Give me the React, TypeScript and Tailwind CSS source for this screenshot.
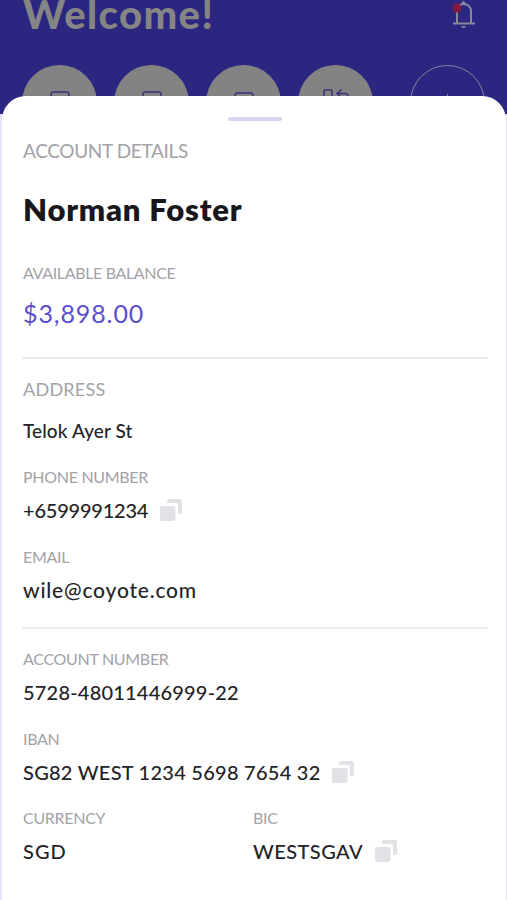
import React from "react";

interface TextProps {
  children: React.ReactNode;
  className?: string;
}

const CopyIcon = () => (
  <svg width="22" height="22" viewBox="0 0 22 22" fill="#e2e2e6">
    <path d="M8.500 0H20a2 2 0 0 1 2 2v11a2 2 0 0 1-2 2h-2V6a2 2 0 0 0-2-2H7V1.500a1.500 1.500 0 0 1 1.500-1.500z" />
    <rect x="0" y="7" width="15.500" height="15" rx="2" />
  </svg>
);

const CardIcon = () => (
  <svg width="20" height="16" viewBox="0 0 20 16" fill="none" stroke="#3a3578" strokeWidth="1.500">
    <rect x="1" y="1" width="18" height="14" rx="2.500" />
  </svg>
);

const TransferIcon = () => (
  <svg width="28" height="20" viewBox="0 0 28 20" fill="none" stroke="#3a3578" strokeWidth="1.500">
    <path d="M2 16V2q0-1 1-1h6q1 0 1 1v14" />
    <path d="M19.500 0.500l-4.500 4 4.500 4M15 4.500h8q3 0 3 3" />
  </svg>
);

const BellIcon = () => (
  <svg width="24" height="30" viewBox="0 0 24 30" fill="none">
    <g stroke="#89879c" strokeWidth="2">
      <path d="M5 23V11c0-4.500 3-7 6.500-7s7.500 2.500 7.500 7v12" />
      <path d="M1 23.500h22" />
    </g>
    <path d="M9 26h5q-.5 2-2.500 2T9 26zM9 4l2.500-3.500L14 4z" fill="#89879c" />
    <circle cx="5" cy="8" r="4.500" fill="#841b3e" />
  </svg>
);

const Circle = ({ children, className = "pt-[26px]" }: TextProps) => (
  <div className={`flex h-[75px] w-[75px] justify-center rounded-full bg-[#838383] ${className}`}>
    {children}
  </div>
);

const Label = ({ children, className = "text-[16px] tracking-[-0.3px]" }: TextProps) => (
  <p className={`h-5 leading-5 whitespace-nowrap text-[#a2a2a7] ${className}`}>{children}</p>
);

const Value = ({ children, className = "text-[20px]" }: TextProps) => (
  <p className={`h-6 font-medium leading-6 whitespace-nowrap text-[#242428] ${className}`}>
    {children}
  </p>
);

const App = () => {
  return (
    <div className="h-[900px] w-[507px] overflow-hidden bg-[#e5e2fa] font-['Lato','Liberation_Sans',sans-serif]">
      <header className="h-[114px] bg-[#2b2680]">
        <div className="flex h-[65px] items-start justify-between pl-[23px] pr-[31px]">
          <h1 className="text-[40px] font-black leading-[28px] tracking-[1.4px] text-[#858585]">
            Welcome!
          </h1>
          <BellIcon />
        </div>
        <div className="flex pl-[22px]">
          <div className="flex gap-[17px]">
            <Circle><CardIcon /></Circle>
            <Circle><CardIcon /></Circle>
            <Circle className="pt-[27px]"><CardIcon /></Circle>
            <Circle className="pt-6"><TransferIcon /></Circle>
          </div>
          <div className="ml-[37px] flex h-[75px] w-[75px] justify-center rounded-full border border-[#85829f] pt-7">
            <span className="h-4 w-px bg-[#85829f]" />
          </div>
        </div>
      </header>

      <main className="relative -mt-[18px] ml-[2px] mr-px h-[804px] rounded-t-[24px] bg-white pl-[21px] pr-[19px] pt-[21px]">
        <div className="mx-auto h-1 w-[54px] rounded-full bg-[#d8d4ee]" />

        <section className="pt-5">
          <Label className="text-[19px] tracking-[-0.35px]">ACCOUNT DETAILS</Label>
          <h2 className="mt-[30px] h-9 text-[31px] font-extrabold leading-9 tracking-[0.8px] whitespace-nowrap text-[#17171c]">
            Norman Foster
          </h2>
          <div className="mt-9">
            <Label className="text-[16px] tracking-[-0.35px]">AVAILABLE BALANCE</Label>
          </div>
          <p className="mt-[14px] h-8 text-[25px] leading-8 tracking-[0.9px] text-[#5b4fd0]">$3,898.00</p>
        </section>

        <hr className="-mx-px mt-7 border-t-2 border-[#ececee]" />

        <section className="pt-5">
          <Label className="text-[18px] tracking-[0.25px]">ADDRESS</Label>
          <Value className="mt-5 text-[19px] tracking-[0.1px]">Telok Ayer St</Value>
          <div className="mt-6 flex flex-col gap-[25px]">
            <div>
              <Label>PHONE NUMBER</Label>
              <div className="mt-[11px] flex items-center gap-3">
                <Value className="text-[20px] tracking-[-0.22px]">+6599991234</Value>
                <CopyIcon />
              </div>
            </div>
            <div>
              <Label>EMAIL</Label>
              <Value className="mt-[11px] text-[21px] tracking-[0.8px]">wile@coyote.com</Value>
            </div>
          </div>
        </section>

        <hr className="-mx-px mt-[25px] border-t-2 border-[#ececee]" />

        <section className="flex flex-col gap-[24.5px] pt-5">
          <div>
            <Label>ACCOUNT NUMBER</Label>
            <Value className="mt-[11px] text-[20px] tracking-[0.2px]">5728-48011446999-22</Value>
          </div>
          <div>
            <Label>IBAN</Label>
            <div className="mt-[11px] flex items-center gap-[11px]">
              <Value className="text-[20px] tracking-[0.26px]">SG82 WEST 1234 5698 7654 32</Value>
              <CopyIcon />
            </div>
          </div>
          <div className="flex">
            <div className="w-[230px]">
              <Label>CURRENCY</Label>
              <Value className="mt-[11px] text-[20px] tracking-[1px]">SGD</Value>
            </div>
            <div>
              <Label>BIC</Label>
              <div className="mt-[11px] flex items-center gap-3">
                <Value className="text-[20px] tracking-[0.45px]">WESTSGAV</Value>
                <CopyIcon />
              </div>
            </div>
          </div>
        </section>
      </main>
    </div>
  );
};

export default App;
